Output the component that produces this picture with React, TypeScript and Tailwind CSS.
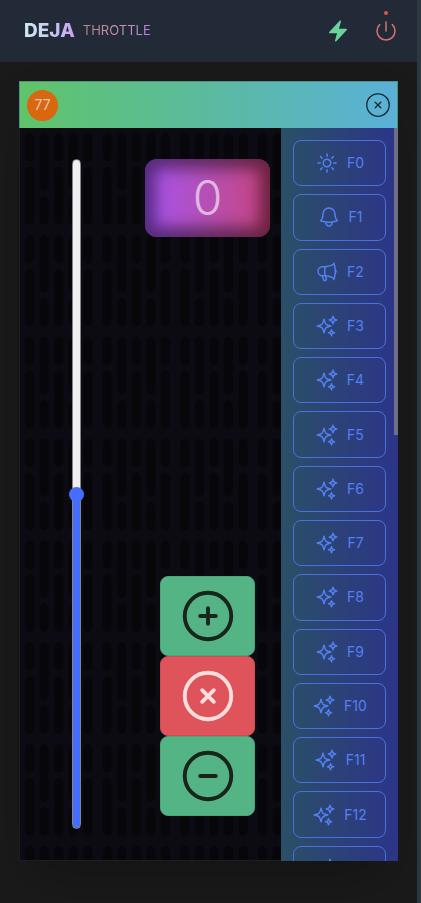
import { useState } from "react";
import type { IconType } from "react-icons";
import {
  HiBolt,
  HiOutlineBell,
  HiOutlineMegaphone,
  HiOutlineMinusCircle,
  HiOutlinePlusCircle,
  HiOutlinePower,
  HiOutlineSparkles,
  HiOutlineSun,
  HiOutlineXCircle,
} from "react-icons/hi2";

const functionIcons: IconType[] = [HiOutlineSun, HiOutlineBell, HiOutlineMegaphone];

const functions = Array.from({ length: 14 }, (_, i) => ({
  label: `F${i}`,
  Icon: functionIcons[i] ?? HiOutlineSparkles,
}));

function Header() {
  return (
    <header className="flex h-[62px] shrink-0 items-center justify-between bg-[#232a37] pr-[19px] pl-6">
      <h1 className="flex items-center gap-2">
        <span className="bg-linear-to-r from-[#cdeeee] to-[#c4a2f2] bg-clip-text text-[19px] font-extrabold text-transparent">
          DEJA
        </span>
        <span className="bg-linear-to-r from-[#b98680] via-[#c692b8] to-[#b488d0] bg-clip-text text-[13px] text-transparent">
          THROTTLE
        </span>
      </h1>
      <div className="flex items-center gap-6">
        <button type="button" aria-label="Track power" className="text-[#6ad29c]">
          <HiBolt className="size-6" />
        </button>
        <button type="button" aria-label="Disconnect" className="relative text-[#d8706b]">
          <HiOutlinePower className="size-6" />
          <span className="absolute -top-2 left-1/2 size-1 -translate-x-1/2 rounded-full bg-[#e5533d]" />
        </button>
      </div>
    </header>
  );
}

function GrillePattern() {
  return (
    <svg className="absolute inset-0 size-full" aria-hidden="true">
      <defs>
        <pattern id="grille" width="16" height="21" patternUnits="userSpaceOnUse" patternTransform="scale(4.85)">
          <g fill="#07070b">
            {[1, 7, 13].map((x) => (
              <g key={x}>
                <rect x={x} y="1" width="2" height="6" rx="1" />
                <rect x={x} y="8" width="2" height="12" rx="1" />
              </g>
            ))}
            {[4, 10].map((x) => (
              <g key={x}>
                <rect x={x} y="1" width="2" height="12" rx="1" />
                <rect x={x} y="14" width="2" height="6" rx="1" />
              </g>
            ))}
          </g>
        </pattern>
      </defs>
      <rect width="100%" height="100%" fill="url(#grille)" />
    </svg>
  );
}

function ControlButton({ label, tone, Icon, onClick }: { label: string; tone: string; Icon: IconType; onClick: () => void }) {
  return (
    <button
      type="button"
      aria-label={label}
      onClick={onClick}
      className={`flex h-20 w-[95px] items-center justify-center rounded-lg border ${tone}`}
    >
      <Icon className="size-[62px]" />
    </button>
  );
}

export default function App() {
  const [speed, setSpeed] = useState(0);
  const fill = 50 + speed / 2;

  return (
    <div className="flex h-screen bg-[#2d3843] font-['Inter',sans-serif]">
      <div className="mr-1 flex min-w-0 flex-1 flex-col bg-[#1a1a1a]">
        <Header />
        <main className="flex min-h-0 flex-1 flex-col px-[19px] pt-[19px] pb-[42px]">
          <div className="flex min-h-0 flex-1 flex-col shadow-2xl">
            <div className="flex h-[47px] shrink-0 items-center justify-between border-x border-t border-[#4f7f76]/70 bg-linear-to-r from-[#60c468] via-[#5bba9f] to-[#5ab0d8] pr-1 pl-[7px]">
              <span className="flex size-[31px] items-center justify-center rounded-full bg-[#d9670f] text-sm text-[#dcc8b4]">
                77
              </span>
              <button type="button" aria-label="Close throttle" className="text-[#10262c]">
                <HiOutlineXCircle className="size-[30px]" strokeWidth={1} />
              </button>
            </div>

            <div className="flex min-h-0 flex-1">
              <section className="relative min-w-0 flex-1 border-b border-l border-[#1c1c24] bg-[#0c0b14]">
                <GrillePattern />
                <div className="relative flex h-full gap-3 py-[31px] pr-[11px]">
                  <div className="flex flex-1 justify-center">
                    <input
                      type="range"
                      aria-label="Speed"
                      min={-100}
                      max={100}
                      value={speed}
                      onChange={(e) => setSpeed(Number(e.target.value))}
                      style={{ "--fill": `${fill}%` } as React.CSSProperties}
                      className="m-0 h-full w-[15px] appearance-none bg-transparent [direction:rtl] [writing-mode:vertical-lr] [&::-webkit-slider-runnable-track]:h-full [&::-webkit-slider-runnable-track]:w-[9px] [&::-webkit-slider-runnable-track]:rounded-full [&::-webkit-slider-runnable-track]:border [&::-webkit-slider-runnable-track]:border-[#858585] [&::-webkit-slider-runnable-track]:bg-[linear-gradient(to_top,#456dff_var(--fill),#efefef_var(--fill))] [&::-webkit-slider-thumb]:-ml-1 [&::-webkit-slider-thumb]:size-[15px] [&::-webkit-slider-thumb]:appearance-none [&::-webkit-slider-thumb]:rounded-full [&::-webkit-slider-thumb]:bg-[#456dff]"
                    />
                  </div>
                  <div className="flex w-[125px] flex-col items-center justify-between pb-[13px]">
                    <output className="flex h-[78px] w-full items-center justify-center rounded-xl bg-linear-to-r from-[#a450f0] to-[#c8407a] text-5xl font-light text-white/60 shadow-[inset_0_0_15px_10px_rgba(0,0,0,0.48)]">
                      {speed}
                    </output>
                    <div className="flex flex-col">
                      <ControlButton
                        label="Faster"
                        tone="border-[#4aa578] bg-[#55b485] text-[#17251d]"
                        Icon={HiOutlinePlusCircle}
                        onClick={() => setSpeed((s) => Math.min(100, s + 1))}
                      />
                      <ControlButton
                        label="Stop"
                        tone="border-[#cf4c54] bg-[#df535b] text-[#fbdedd]"
                        Icon={HiOutlineXCircle}
                        onClick={() => setSpeed(0)}
                      />
                      <ControlButton
                        label="Slower"
                        tone="border-[#4aa578] bg-[#55b485] text-[#17251d]"
                        Icon={HiOutlineMinusCircle}
                        onClick={() => setSpeed((s) => Math.max(-100, s - 1))}
                      />
                    </div>
                  </div>
                </div>
              </section>

              <aside className="relative w-[117px] shrink-0 bg-linear-to-r from-[#2a5066] via-[#2c4178] to-[#2c3488]">
                <div className="h-full overflow-y-auto [scrollbar-width:none]">
                  <div className="flex h-[764px] flex-col gap-2 px-3 pt-3">
                    {functions.map(({ label, Icon }) => (
                      <button
                        key={label}
                        type="button"
                        className="flex min-h-0 flex-1 items-center justify-center gap-2 rounded-lg border border-[#4a70dc] text-sm text-[#5580f2]"
                      >
                        <Icon className="size-6" />
                        {label}
                      </button>
                    ))}
                  </div>
                </div>
                <span className="absolute top-0 right-0 h-[307px] w-1 bg-[#6f6e86]" />
              </aside>
            </div>
          </div>
        </main>
      </div>
    </div>
  );
}
